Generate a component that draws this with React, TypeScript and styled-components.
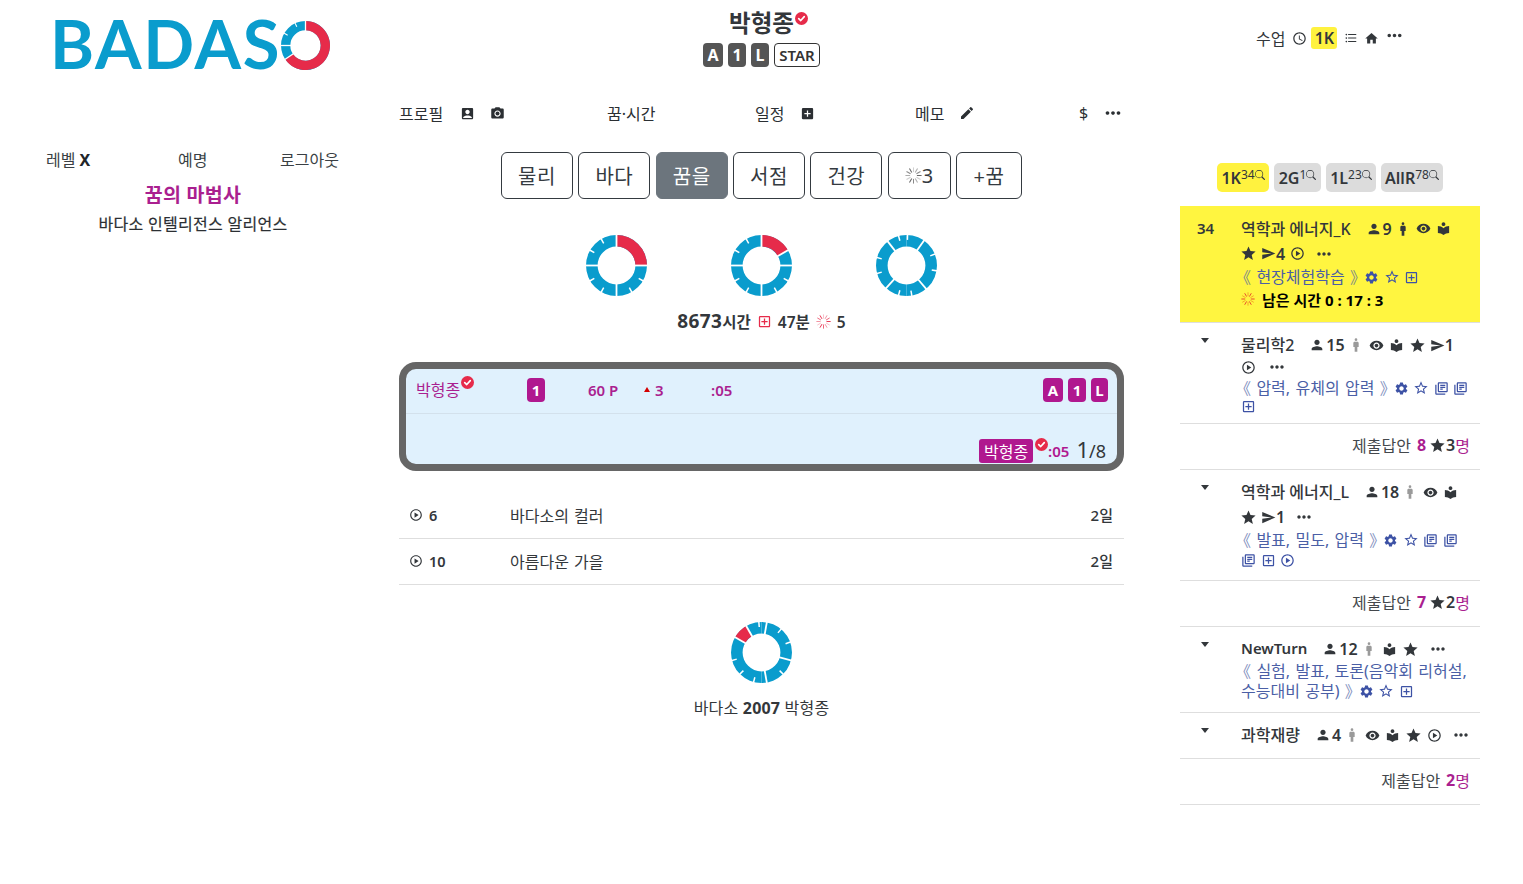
import React from 'react';
import styled, { createGlobalStyle } from 'styled-components';
import {
  MdPerson, MdVisibility, MdLocalLibrary, MdStar, MdSend, MdOutlinePlayCircle, MdSettings,
  MdStarBorder, MdOutlineAddBox, MdOutlineLibraryBooks, MdMoreHoriz, MdHome, MdFormatListBulleted,
  MdAccessTime, MdAccountBox, MdPhotoCamera, MdAddBox, MdEdit, MdMan,
} from 'react-icons/md';
import { BsSearch } from 'react-icons/bs';

const Global = createGlobalStyle`
  html, body { margin: 0; padding: 0; background: #fff; }
  body {
    font-family: "Noto Sans", "Noto Sans CJK KR", sans-serif;
    font-size: 16px;
    color: #212529;
  }
  * { box-sizing: border-box; }
`;

const BLUE = '#0a9ccd';
const RED = '#e62b4a';
const MAGENTA = '#b0188f';
const LINK = '#4b5fa6';

const Page = styled.div`
  display: grid;
  grid-template-columns: 399px 725px 300px;
  width: 1523px;
  height: 884px;
  overflow: hidden;
`;

/* ---------- left ---------- */
const LeftCol = styled.aside`
  display: flex;
  flex-direction: column;
  width: 386px;
`;
const LogoRow = styled.div`
  display: flex;
  align-items: center;
  height: 90px;
  padding-left: 50px;
`;
const LogoText = styled.span`
  font-family: "Lato", sans-serif;
  font-weight: 700;
  font-size: 67px;
  line-height: 90px;
  margin-top: -5px;
  color: ${BLUE};
  letter-spacing: 1.7px;
`;
const LeftNav = styled.nav`
  display: grid;
  grid-template-columns: 132px 102px auto;
  padding: 60px 0 0 46px;
  font-size: 16px;
  line-height: 20px;
  color: #3a3f44;
`;
const StrongX = styled.b`
  color: #212529;
  font-weight: 700;
`;
const Title = styled.div`
  margin-top: 13px;
  text-align: center;
  font-size: 19.5px;
  line-height: 24px;
  font-weight: 700;
  color: #aa1f90;
  letter-spacing: 0.3px;
`;
const SubTitle = styled.div`
  margin-top: 5px;
  text-align: center;
  font-size: 16px;
  line-height: 24px;
  color: #2b2f33;
  letter-spacing: 0.3px;
  -webkit-text-stroke: 0.2px #2b2f33;
`;

/* ---------- center ---------- */
const CenterCol = styled.main`
  display: flex;
  flex-direction: column;
`;
const Header = styled.div`
  display: flex;
  flex-direction: column;
  align-items: center;
  height: 98px;
  padding-top: 8px;
`;
const Name = styled.div`
  position: relative;
  font-size: 23.5px;
  line-height: 30px;
  font-weight: 700;
  color: #33373b;
`;
const NameCheck = styled.span`
  position: absolute;
  left: 100%;
  top: 4px;
  margin-left: 1px;
`;
const BadgeRow = styled.div`
  display: flex;
  align-items: center;
  gap: 5px;
  margin-top: 5px;
`;
const DarkBadge = styled.span<{ $w: number }>`
  display: inline-flex;
  align-items: center;
  justify-content: center;
  width: ${p => p.$w}px;
  height: 24px;
  background: #555;
  color: #fff;
  font-size: 16px;
  font-weight: 700;
  border-radius: 4px;
`;
const StarBadge = styled.span`
  display: inline-flex;
  align-items: center;
  justify-content: center;
  width: 46px;
  height: 24px;
  border: 1px solid #333;
  border-radius: 4px;
  font-size: 15px;
  font-weight: 600;
  color: #333;
`;
const TopNav = styled.nav`
  display: grid;
  grid-template-columns: 208px 148px 160px 164px auto;
  align-items: center;
  height: 30px;
  font-size: 16px;
  color: #33373b;
`;
const NavGroup = styled.span`
  display: inline-flex;
  align-items: center;
  color: #2b2f33;
`;
const NavIcon = styled.span<{ $ml: number }>`
  display: inline-flex;
  margin-left: ${p => p.$ml}px;
`;
const Tabs = styled.div`
  display: flex;
  justify-content: center;
  gap: 5.33px;
  margin-top: 24px;
`;
const TabBtn = styled.button<{ $active?: boolean; $w: number }>`
  display: inline-flex;
  align-items: center;
  justify-content: center;
  width: ${p => p.$w}px;
  height: 47px;
  padding: 0;
  font-family: inherit;
  font-size: 20px;
  letter-spacing: 0.5px;
  border: 1px solid ${p => (p.$active ? '#6c757d' : '#343a40')};
  border-radius: 6px;
  background: ${p => (p.$active ? '#6c757d' : '#fff')};
  color: ${p => (p.$active ? '#fff' : '#343a40')};
`;
const Donuts = styled.div`
  display: flex;
  justify-content: center;
  gap: 84px;
  margin-top: 36px;
`;
const Stats = styled.div`
  display: flex;
  justify-content: center;
  align-items: baseline;
  margin-top: 11px;
  font-size: 15.5px;
  line-height: 28px;
  color: #33373b;
  font-weight: 600;
`;
const BigNum = styled.span`
  font-size: 19px;
  font-weight: 700;
  letter-spacing: 0.4px;
`;
const StatsIcon = styled.span`
  display: inline-flex;
  align-self: center;
  margin: 0 6px;
`;
const Panel = styled.section`
  margin-top: 26px;
  height: 109px;
  border: 7px solid #666;
  border-radius: 17px;
  background: #e0f1fd;
  display: flex;
  flex-direction: column;
  color: #aa1f90;
`;
const PanelTop = styled.div`
  display: grid;
  grid-template-columns: 111px 61px 56px 67px 1fr auto;
  align-items: center;
  height: 45px;
  padding: 0 9px 3px 10px;
  border-bottom: 1px solid #d3e1ec;
  font-weight: 600;
  font-size: 15px;
`;
const PanelName = styled.span`
  display: inline-flex;
  align-items: flex-start;
  font-weight: 400;
  font-size: 16px;
  line-height: 20px;
  color: #aa1f90;
`;
const PanelNameCheck = styled.span`
  margin: -4px 0 0 1px;
`;
const MagentaBadge = styled.span<{ $w: number }>`
  display: inline-flex;
  align-items: center;
  justify-content: center;
  width: ${p => p.$w}px;
  height: 24px;
  background: ${MAGENTA};
  color: #fff;
  font-size: 15px;
  font-weight: 700;
  border-radius: 4px;
`;
const Trend = styled.span`
  display: inline-flex;
  align-items: center;
  gap: 5px;
`;
const Triangle = styled.span`
  width: 0;
  height: 0;
  border-left: 3.5px solid transparent;
  border-right: 3.5px solid transparent;
  border-bottom: 5px solid #d40000;
`;
const BadgeGroup = styled.span`
  display: inline-flex;
  gap: 5px;
`;
const PanelBottom = styled.div`
  flex: 1;
  display: flex;
  justify-content: flex-end;
  align-items: flex-end;
  padding: 0 11px 1px 0;
`;
const PanelTag = styled.span`
  display: inline-flex;
  align-items: center;
  justify-content: center;
  width: 54px;
  height: 24px;
  background: ${MAGENTA};
  color: #fff;
  font-size: 16px;
  border-radius: 3px;
`;
const Tick = styled.span`
  display: inline-flex;
  margin: 0 0 12px 2px;
`;
const TimeText = styled.span`
  font-size: 15px;
  font-weight: 600;
  line-height: 24px;
  color: #b0188f;
`;
const Fraction = styled.span`
  margin-left: 7px;
  font-size: 18px;
  line-height: 24px;
  font-weight: 400;
  color: #33373b;
`;
const FractionBig = styled.span`
  font-size: 22px;
`;
const LessonList = styled.div`
  margin-top: 22px;
`;
const LessonRow = styled.div`
  display: grid;
  grid-template-columns: 101px 1fr auto;
  align-items: center;
  height: 46px;
  padding: 0 11px 2px 10px;
  border-bottom: 1px solid #dedede;
`;
const LessonNum = styled.span`
  display: inline-flex;
  align-items: center;
  gap: 6px;
  font-size: 14.5px;
  font-weight: 600;
  color: #33373b;
`;
const LessonTitle = styled.span`
  font-size: 16px;
  word-spacing: 1px;
  color: #33373b;
`;
const LessonDays = styled.span`
  font-size: 15px;
  font-weight: 500;
  color: #33373b;
`;
const Footer = styled.footer`
  display: flex;
  flex-direction: column;
  align-items: center;
  margin-top: 37px;
`;
const FooterText = styled.div`
  margin-top: 13px;
  font-size: 16px;
  line-height: 24px;
  color: #33373b;
  letter-spacing: 0.2px;
`;
const Bold = styled.b`
  font-weight: 700;
`;

/* ---------- right ---------- */
const RightCol = styled.aside`
  margin-left: 56px;
  width: 300px;
  display: flex;
  flex-direction: column;
`;
const RightTop = styled.div`
  display: flex;
  align-items: center;
  height: 76px;
  padding: 0 0 0 76px;
  font-size: 16px;
  color: #33373b;
`;
const RightTopLabel = styled.span`
  margin-right: 7px;
`;
const YellowPill = styled.span`
  display: inline-flex;
  align-items: center;
  justify-content: center;
  width: 26px;
  height: 22px;
  margin: 0 7px 0 4px;
  border-radius: 3px;
  background: #fff23f;
  font-size: 16px;
  font-weight: 600;
`;
const RightTopIcon = styled.span<{ $ml?: number; $mt?: number }>`
  display: inline-flex;
  margin-left: ${p => p.$ml ?? 0}px;
  margin-top: ${p => p.$mt ?? 0}px;
`;
const GroupTabs = styled.div`
  display: flex;
  justify-content: center;
  gap: 5px;
  margin-top: 87px;
`;
const GroupTab = styled.span<{ $yellow?: boolean; $w: number }>`
  display: inline-flex;
  align-items: center;
  justify-content: center;
  width: ${p => p.$w}px;
  height: 29px;
  border-radius: 5px;
  background: ${p => (p.$yellow ? '#fff23f' : '#dcdcdc')};
  font-size: 16px;
  font-weight: 600;
  color: #33373b;
`;
const Sup = styled.sup`
  display: inline-flex;
  align-items: center;
  font-size: 12px;
  font-weight: 400;
  line-height: 1;
  margin-top: -6px;
  vertical-align: baseline;
`;
const SideList = styled.div`
  margin-top: 14px;
`;
const ClassRow = styled.div<{ $yellow?: boolean; $pt?: number; $pb?: number }>`
  display: grid;
  grid-template-columns: 61px 1fr;
  padding: ${p => p.$pt ?? 10}px 0 ${p => p.$pb ?? 10}px 0;
  background: ${p => (p.$yellow ? '#fff540' : 'transparent')};
  border-bottom: 1px solid #dedede;
`;
const RankCell = styled.div`
  padding-left: 17px;
  font-size: 15px;
  font-weight: 600;
  line-height: 25px;
  color: #33373b;
`;
const CaretCell = styled.div`
  padding: 5px 0 0 21px;
`;
const Caret = styled.div`
  width: 0;
  height: 0;
  border-left: 4.5px solid transparent;
  border-right: 4.5px solid transparent;
  border-top: 5px solid #33373b;
`;
const Line = styled.div<{ $h: number; $gap?: number; $ml?: number }>`
  display: flex;
  align-items: center;
  height: ${p => p.$h}px;
  gap: ${p => p.$gap ?? 5}px;
  margin-left: ${p => p.$ml ?? 0}px;
  color: #33373b;
  white-space: nowrap;
`;
const ClassName = styled.span<{ $mr: number; $latin?: boolean }>`
  font-size: ${p => (p.$latin ? 15 : 16)}px;
  font-weight: ${p => (p.$latin ? 600 : 500)};
  color: #33373b;
  margin-top: -2px;
  margin-right: ${p => p.$mr}px;
`;
const Count = styled.span`
  display: inline-flex;
  align-items: center;
  font-size: 16px;
  font-weight: 600;
`;
const SendCount = styled(Count)`
  margin-left: -1px;
`;
const CatText = styled.span`
  font-size: 16px;
  word-spacing: 1.2px;
  color: ${LINK};
  margin-top: -2px;
`;
const Bracket = styled.span<{ $ml?: number; $mr?: number }>`
  margin-left: ${p => p.$ml ?? 0}px;
  margin-right: ${p => p.$mr ?? 0}px;
  opacity: 0.7;
`;
const LinkIcons = styled.span`
  display: inline-flex;
  align-items: center;
  gap: 4.5px;
  color: #3d52a5;
`;
const Remaining = styled.span`
  display: inline-flex;
  align-items: center;
  gap: 7px;
  font-size: 15px;
  font-weight: 700;
  color: #000;
`;
const SubRow = styled.div`
  display: flex;
  align-items: center;
  justify-content: flex-end;
  height: 46px;
  padding: 0 10px 3px 0;
  border-bottom: 1px solid #dedede;
  font-size: 16px;
  color: #44484c;
`;
const SubNum = styled.b`
  margin-left: 6px;
  font-weight: 700;
  color: #aa1f90;
`;
const SubStar = styled.span`
  display: inline-flex;
  align-items: center;
  margin-left: 3px;
  font-weight: 600;
  color: #33373b;
`;
const Unit = styled.span`
  color: #aa1f90;
`;
const Tail = styled.span`
  display: inline-flex;
  margin-left: 4px;
`;
const ManSlot = styled.span`
  display: inline-flex;
  margin-left: -2px;
`;
const PersonSlot = styled.span`
  display: inline-flex;
  margin: 0 1px 0 -2px;
`;

/* ---------- drawings ---------- */
const polar = (cx: number, cy: number, r: number, deg: number) => {
  const a = ((deg - 90) * Math.PI) / 180;
  return [cx + r * Math.cos(a), cy + r * Math.sin(a)];
};
const arcPath = (c: number, ro: number, ri: number, a0: number, a1: number) => {
  const [x0, y0] = polar(c, c, ro, a0);
  const [x1, y1] = polar(c, c, ro, a1);
  const [x2, y2] = polar(c, c, ri, a1);
  const [x3, y3] = polar(c, c, ri, a0);
  const large = a1 - a0 > 180 ? 1 : 0;
  return `M${x0} ${y0}A${ro} ${ro} 0 ${large} 1 ${x1} ${y1}L${x2} ${y2}A${ri} ${ri} 0 ${large} 0 ${x3} ${y3}Z`;
};

type DonutProps = {
  size?: number;
  red?: [number, number][];
  gaps: number[];
  ticks: number[];
};
const Donut = ({ size = 61, red = [], gaps, ticks }: DonutProps) => {
  const c = size / 2;
  const ro = c;
  const ri = size * 0.31;
  return (
    <svg width={size} height={size} viewBox={`0 0 ${size} ${size}`} style={{ display: 'block', flex: 'none' }}>
      <path d={arcPath(c, ro, ri, 0, 180)} fill={BLUE} />
      <path d={arcPath(c, ro, ri, 180, 360)} fill={BLUE} />
      {red.map(([a, b]) => (
        <path key={a} d={arcPath(c, ro, ri, a, b)} fill={RED} />
      ))}
      {gaps.map(g => {
        const [x0, y0] = polar(c, c, ri - 1, g);
        const [x1, y1] = polar(c, c, ro + 1, g);
        return <line key={g} x1={x0} y1={y0} x2={x1} y2={y1} stroke="#fff" strokeWidth={size > 55 ? 1.8 : 1.3} />;
      })}
      {ticks.map(g => {
        const [x0, y0] = polar(c, c, ro - size * 0.08, g);
        const [x1, y1] = polar(c, c, ro + 1, g);
        return <line key={g} x1={x0} y1={y0} x2={x1} y2={y1} stroke="#fff" strokeWidth={size > 55 ? 1.5 : 1.1} />;
      })}
    </svg>
  );
};

const Check = ({ size = 13 }: { size?: number }) => (
  <svg width={size} height={size} viewBox="0 0 14 14" style={{ display: 'block', flex: 'none' }}>
    <circle cx="7" cy="7" r="7" fill={RED} />
    <path d="M4 7.2 6.2 9.2 10 5" fill="none" stroke="#fff" strokeWidth="1.8" strokeLinecap="round" strokeLinejoin="round" />
  </svg>
);

const Spinner = ({ color = '#666', size = 16 }: { color?: string; size?: number }) => (
  <svg width={size} height={size} viewBox="0 0 16 16" style={{ display: 'block', flex: 'none' }}>
    {[0, 30, 60, 90, 120, 150, 180, 210, 240, 270, 300, 330].map((d, i) => {
      const [x0, y0] = polar(8, 8, 3.2, d);
      const [x1, y1] = polar(8, 8, 7.6, d);
      return <line key={d} x1={x0} y1={y0} x2={x1} y2={y1} stroke={color} strokeWidth="1" opacity={0.3 + (i % 4) * 0.23} />;
    })}
  </svg>
);

const Orange = () => (
  <svg width="14" height="14" viewBox="0 0 16 16" style={{ display: 'block', flex: 'none' }}>
    {[0, 30, 60, 90, 120, 150, 180, 210, 240, 270, 300, 330].map((d, i) => {
      const [x0, y0] = polar(8, 8, 3.2, d);
      const [x1, y1] = polar(8, 8, 7.6, d);
      return <line key={d} x1={x0} y1={y0} x2={x1} y2={y1} stroke={i % 2 ? '#e6352a' : '#f2a020'} strokeWidth="1" />;
    })}
  </svg>
);

const Person = () => <PersonSlot><MdPerson size={16} /></PersonSlot>;
const Man = ({ faded }: { faded?: boolean }) => (
  <ManSlot><MdMan size={16} color={faded ? '#9a9a9a' : '#33373b'} /></ManSlot>
);
const Eye = () => <MdVisibility size={15} />;
const Book = () => <MdLocalLibrary size={15} />;
const Star = () => <MdStar size={17} />;
const Send = ({ n }: { n: string }) => (
  <SendCount>
    <MdSend size={15} />
    {n}
  </SendCount>
);
const Play = () => <MdOutlinePlayCircle size={15} />;
const Dots = () => <MdMoreHoriz size={20} />;
const Gear = () => <MdSettings size={15} />;
const StarO = () => <MdStarBorder size={16} />;
const PlusBox = () => <MdOutlineAddBox size={15} />;
const Notes = () => <MdOutlineLibraryBooks size={15} />;

export default function App() {
  return (
    <Page>
      <Global />
      <LeftCol>
        <LogoRow>
          <LogoText>BADAS</LogoText>
          <Donut size={49} red={[[0, 236]]} gaps={[0, 236, 270]} ticks={[300, 335]} />
        </LogoRow>
        <LeftNav>
          <span>레벨 <StrongX>X</StrongX></span>
          <span>예명</span>
          <span>로그아웃</span>
        </LeftNav>
        <Title>꿈의 마법사</Title>
        <SubTitle>바다소 인텔리전스 알리언스</SubTitle>
      </LeftCol>

      <CenterCol>
        <Header>
          <Name>
            박형종
            <NameCheck><Check size={13} /></NameCheck>
          </Name>
          <BadgeRow>
            <DarkBadge $w={20}>A</DarkBadge>
            <DarkBadge $w={18}>1</DarkBadge>
            <DarkBadge $w={18}>L</DarkBadge>
            <StarBadge>STAR</StarBadge>
          </BadgeRow>
        </Header>
        <TopNav>
          <NavGroup>
            프로필
            <NavIcon $ml={17}><MdAccountBox size={15} /></NavIcon>
            <NavIcon $ml={15}><MdPhotoCamera size={15} /></NavIcon>
          </NavGroup>
          <NavGroup>꿈·시간</NavGroup>
          <NavGroup>
            일정
            <NavIcon $ml={16}><MdAddBox size={15} /></NavIcon>
          </NavGroup>
          <NavGroup>
            메모
            <NavIcon $ml={15}><MdEdit size={16} /></NavIcon>
          </NavGroup>
          <NavGroup>
            $
            <NavIcon $ml={14}><MdMoreHoriz size={22} /></NavIcon>
          </NavGroup>
        </TopNav>
        <Tabs>
          <TabBtn $w={72}>물리</TabBtn>
          <TabBtn $w={72}>바다</TabBtn>
          <TabBtn $w={72} $active>꿈을</TabBtn>
          <TabBtn $w={72}>서점</TabBtn>
          <TabBtn $w={72}>건강</TabBtn>
          <TabBtn $w={63}><Spinner size={17} />3</TabBtn>
          <TabBtn $w={66}>+꿈</TabBtn>
        </Tabs>
        <Donuts>
          <Donut red={[[0, 90]]} gaps={[0, 90, 180, 270]} ticks={[120, 150, 210, 240, 300, 330]} />
          <Donut red={[[0, 60]]} gaps={[0, 60, 90, 180, 270]} ticks={[120, 150, 210, 240, 300, 330]} />
          <Donut gaps={[35, 140, 222, 322]} ticks={[2, 68, 100, 170, 195, 255, 285, 345]} />
        </Donuts>
        <Stats>
          <BigNum>8673</BigNum>시간
          <StatsIcon><MdOutlineAddBox size={15} color={RED} /></StatsIcon>
          47분
          <StatsIcon><Spinner size={15} color={RED} /></StatsIcon>
          5
        </Stats>
        <Panel>
          <PanelTop>
            <PanelName>박형종<PanelNameCheck><Check size={13} /></PanelNameCheck></PanelName>
            <MagentaBadge $w={18}>1</MagentaBadge>
            <span>60 P</span>
            <Trend><Triangle />3</Trend>
            <span>:05</span>
            <BadgeGroup>
              <MagentaBadge $w={20}>A</MagentaBadge>
              <MagentaBadge $w={18}>1</MagentaBadge>
              <MagentaBadge $w={17}>L</MagentaBadge>
            </BadgeGroup>
          </PanelTop>
          <PanelBottom>
            <PanelTag>박형종</PanelTag>
            <Tick><Check size={13} /></Tick>
            <TimeText>:05</TimeText>
            <Fraction><FractionBig>1</FractionBig>/8</Fraction>
          </PanelBottom>
        </Panel>
        <LessonList>
          <LessonRow>
            <LessonNum><MdOutlinePlayCircle size={14} />6</LessonNum>
            <LessonTitle>바다소의 컬러</LessonTitle>
            <LessonDays>2일</LessonDays>
          </LessonRow>
          <LessonRow>
            <LessonNum><MdOutlinePlayCircle size={14} />10</LessonNum>
            <LessonTitle>아름다운 가을</LessonTitle>
            <LessonDays>2일</LessonDays>
          </LessonRow>
        </LessonList>
        <Footer>
          <Donut red={[[300, 330]]} gaps={[10, 105, 170, 300, 330]} ticks={[40, 70, 135, 195, 225, 255, 355]} />
          <FooterText>바다소 <Bold>2007</Bold> 박형종</FooterText>
        </Footer>
      </CenterCol>

      <RightCol>
        <RightTop>
          <RightTopLabel>수업</RightTopLabel>
          <MdAccessTime size={15} />
          <YellowPill>1K</YellowPill>
          <MdFormatListBulleted size={14} />
          <RightTopIcon $ml={6}><MdHome size={15} /></RightTopIcon>
          <RightTopIcon $ml={5} $mt={-6}><MdMoreHoriz size={21} /></RightTopIcon>
        </RightTop>
        <GroupTabs>
          <GroupTab $yellow $w={52}>1K<Sup>34<BsSearch size={10} /></Sup></GroupTab>
          <GroupTab $w={47}>2G<Sup>1<BsSearch size={10} /></Sup></GroupTab>
          <GroupTab $w={50}>1L<Sup>23<BsSearch size={10} /></Sup></GroupTab>
          <GroupTab $w={62}>AllR<Sup>78<BsSearch size={10} /></Sup></GroupTab>
        </GroupTabs>
        <SideList>
          <ClassRow $yellow $pb={12}>
            <RankCell>34</RankCell>
            <div>
              <Line $h={25}>
                <ClassName $mr={12}>역학과 에너지_K</ClassName>
                <Count><Person />9</Count>
                <Man />
                <Eye />
                <Book />
              </Line>
              <Line $h={25} $ml={-1}>
                <Star />
                <Send n="4" />
                <Play />
                <Tail><Dots /></Tail>
              </Line>
              <Line $h={22} $gap={2}>
                <CatText><Bracket $ml={-6}>《</Bracket> 현장체험학습 <Bracket $mr={-4}>》</Bracket></CatText>
                <LinkIcons><Gear /><StarO /><PlusBox /></LinkIcons>
              </Line>
              <Line $h={22}>
                <Remaining><Orange />남은 시간 0 : 17 : 3</Remaining>
              </Line>
            </div>
          </ClassRow>
          <ClassRow>
            <CaretCell><Caret /></CaretCell>
            <div>
              <Line $h={24}>
                <ClassName $mr={12}>물리학2</ClassName>
                <Count><Person />15</Count>
                <Man faded />
                <Eye />
                <Book />
                <Star />
                <Send n="1" />
              </Line>
              <Line $h={20} $gap={11}>
                <Play />
                <Dots />
              </Line>
              <Line $h={22} $gap={2}>
                <CatText><Bracket $ml={-6}>《</Bracket> 압력, 유체의 압력 <Bracket $mr={-4}>》</Bracket></CatText>
                <LinkIcons><Gear /><StarO /><Notes /><Notes /></LinkIcons>
              </Line>
              <Line $h={14}>
                <LinkIcons><PlusBox /></LinkIcons>
              </Line>
            </div>
          </ClassRow>
          <SubRow>
            제출답안<SubNum>8</SubNum>
            <SubStar><MdStar size={17} />3</SubStar>
            <Unit>명</Unit>
          </SubRow>
          <ClassRow>
            <CaretCell><Caret /></CaretCell>
            <div>
              <Line $h={24}>
                <ClassName $mr={12}>역학과 에너지_L</ClassName>
                <Count><Person />18</Count>
                <Man faded />
                <Eye />
                <Book />
              </Line>
              <Line $h={26} $ml={-1}>
                <Star />
                <Send n="1" />
                <Tail><Dots /></Tail>
              </Line>
              <Line $h={20} $gap={2}>
                <CatText><Bracket $ml={-6}>《</Bracket> 발표, 밀도, 압력 <Bracket $mr={-4}>》</Bracket></CatText>
                <LinkIcons><Gear /><StarO /><Notes /><Notes /></LinkIcons>
              </Line>
              <Line $h={20}>
                <LinkIcons><Notes /><PlusBox /><Play /></LinkIcons>
              </Line>
            </div>
          </ClassRow>
          <SubRow>
            제출답안<SubNum>7</SubNum>
            <SubStar><MdStar size={17} />2</SubStar>
            <Unit>명</Unit>
          </SubRow>
          <ClassRow $pb={11}>
            <CaretCell><Caret /></CaretCell>
            <div>
              <Line $h={24}>
                <ClassName $mr={12} $latin>NewTurn</ClassName>
                <Count><Person />12</Count>
                <Man faded />
                <Book />
                <Star />
                <Tail><Dots /></Tail>
              </Line>
              <Line $h={20}>
                <CatText><Bracket $ml={-6}>《</Bracket> 실험, 발표, 토론(음악회 리허설,</CatText>
              </Line>
              <Line $h={20} $gap={2}>
                <CatText>수능대비 공부) <Bracket $mr={-4}>》</Bracket></CatText>
                <LinkIcons><Gear /><StarO /><PlusBox /></LinkIcons>
              </Line>
            </div>
          </ClassRow>
          <ClassRow $pb={11}>
            <CaretCell><Caret /></CaretCell>
            <div>
              <Line $h={24}>
                <ClassName $mr={12}>과학재량</ClassName>
                <Count><Person />4</Count>
                <Man faded />
                <Eye />
                <Book />
                <Star />
                <Play />
                <Tail><Dots /></Tail>
              </Line>
            </div>
          </ClassRow>
          <SubRow>
            제출답안<SubNum>2</SubNum>
            <Unit>명</Unit>
          </SubRow>
        </SideList>
      </RightCol>
    </Page>
  );
}
